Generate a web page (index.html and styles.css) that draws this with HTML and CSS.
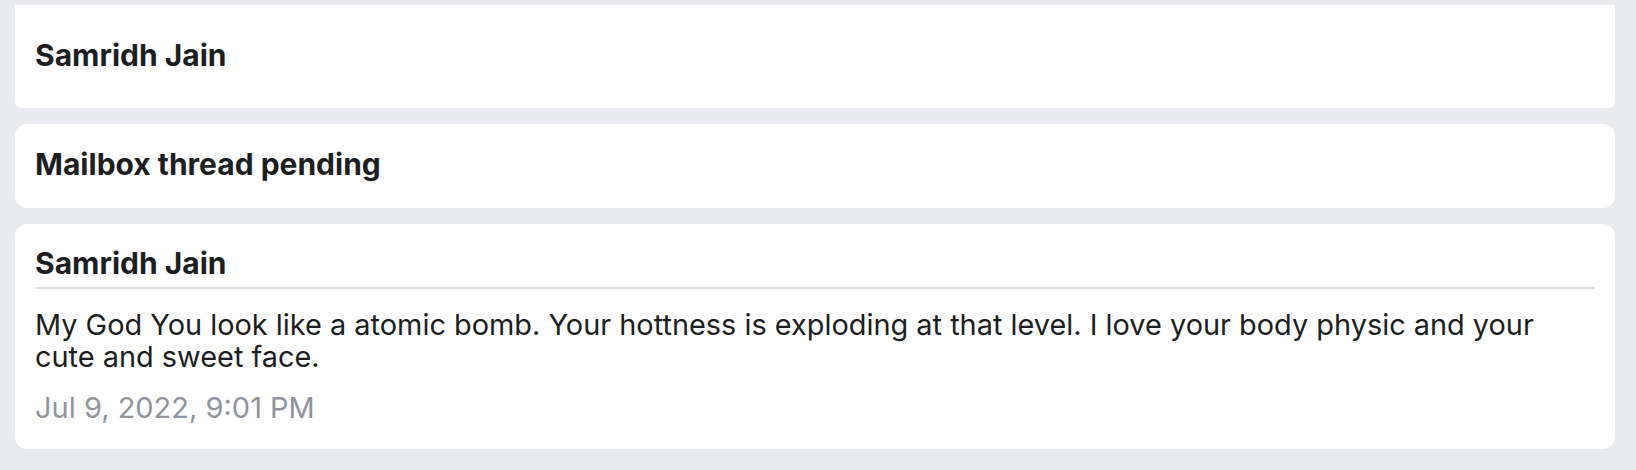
FILE: index.html
```html
<!DOCTYPE html>
<html>
<head>
<meta charset="utf-8">
<link rel="stylesheet" href="styles.css">
</head>
<body>
<div class="list">
  <div class="card card-top">
    <div class="title">Samridh Jain</div>
  </div>
  <div class="card card-status">
    <div class="title">Mailbox thread pending</div>
  </div>
  <div class="card card-msg">
    <div class="title msg-head">Samridh Jain</div>
    <div class="msg-body">My God You look like a atomic bomb. Your hottness is exploding at that level. I love your body physic and your cute and sweet face.</div>
    <div class="msg-time">Jul 9, 2022, 9:01 PM</div>
  </div>
</div>
</body>
</html>
```
FILE: styles.css
```css
html, body {
  margin: 0;
  padding: 0;
  background: #e9eaee;
}
body {
  font-family: Inter, "Noto Sans", sans-serif;
  color: #1c1e21;
  height: 470px;
  overflow: hidden;
}
.list {
  display: flex;
  flex-direction: column;
  gap: 16px;
  padding: 5px 21px 20px 15px;
}
.card {
  background: #ffffff;
  border-radius: 12px;
  padding: 0 20px;
}
.card-top {
  border-radius: 0 0 6px 6px;
  padding-top: 34px;
  padding-bottom: 37px;
}
.card-status {
  padding-top: 24px;
  padding-bottom: 28px;
}
.title {
  font-weight: 700;
  font-size: 30px;
  line-height: 32px;
}
.card-msg {
  padding-top: 23px;
  padding-bottom: 25px;
}
.msg-head {
  padding-bottom: 8px;
  border-bottom: 2px solid #dcdde1;
}
.msg-body {
  font-size: 28.9px;
  line-height: 31.5px;
  margin-top: 20px;
  max-width: 1530px;
}
.msg-time {
  font-size: 29px;
  line-height: 32px;
  color: #8f949c;
  margin-top: 20px;
}
```
